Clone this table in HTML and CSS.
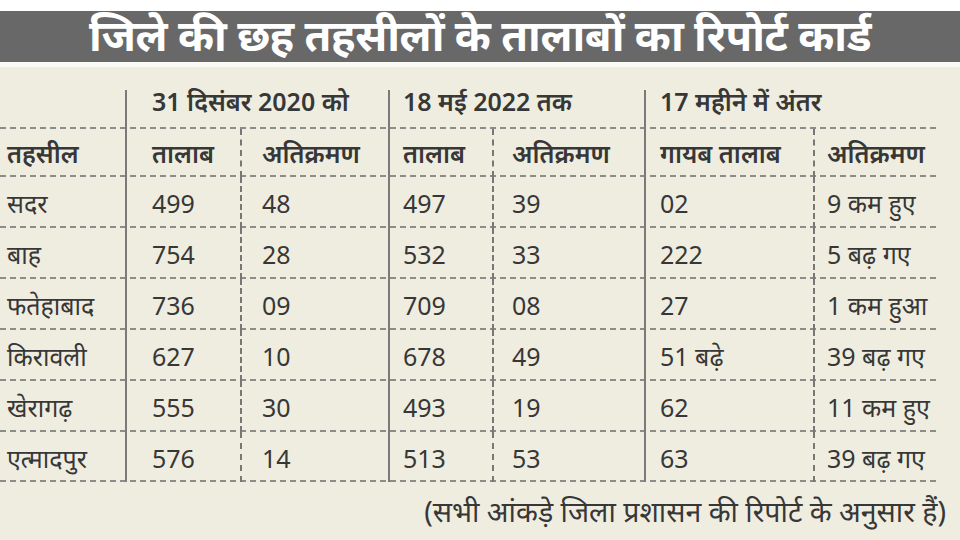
FILE: index.html
```html
<!DOCTYPE html>
<html lang="hi">
<head>
<meta charset="utf-8">
<title>तालाबों का रिपोर्ट कार्ड</title>
<link rel="stylesheet" href="styles.css">
</head>
<body>
<div class="page">
  <div class="topgap"></div>
  <header class="banner"><h1 class="title">जिले की छह तहसीलों के तालाबों का रिपोर्ट कार्ड</h1></header>
  <div class="gap"></div>
  <main class="body">
    <div class="table">
      <div class="row group">
        <div class="c first"></div>
        <div class="c span solid p2">31 दिसंबर 2020 को</div>
        <div class="c span solid p4">18 मई 2022 तक</div>
        <div class="c span solid p6">17 महीने में अंतर</div>
      </div>
      <div class="row head">
        <div class="c first">तहसील</div>
        <div class="c solid p2">तालाब</div>
        <div class="c sub p3">अतिक्रमण</div>
        <div class="c solid p4">तालाब</div>
        <div class="c sub p5">अतिक्रमण</div>
        <div class="c solid p6">गायब तालाब</div>
        <div class="c sub p7">अतिक्रमण</div>
      </div>
      <div class="row data">
        <div class="c first">सदर</div>
        <div class="c solid p2">499</div>
        <div class="c sub p3">48</div>
        <div class="c solid p4">497</div>
        <div class="c sub p5">39</div>
        <div class="c solid p6">02</div>
        <div class="c sub p7">9 कम हुए</div>
      </div>
      <div class="row data">
        <div class="c first">बाह</div>
        <div class="c solid p2">754</div>
        <div class="c sub p3">28</div>
        <div class="c solid p4">532</div>
        <div class="c sub p5">33</div>
        <div class="c solid p6">222</div>
        <div class="c sub p7">5 बढ़ गए</div>
      </div>
      <div class="row data">
        <div class="c first">फतेहाबाद</div>
        <div class="c solid p2">736</div>
        <div class="c sub p3">09</div>
        <div class="c solid p4">709</div>
        <div class="c sub p5">08</div>
        <div class="c solid p6">27</div>
        <div class="c sub p7">1 कम हुआ</div>
      </div>
      <div class="row data">
        <div class="c first">किरावली</div>
        <div class="c solid p2">627</div>
        <div class="c sub p3">10</div>
        <div class="c solid p4">678</div>
        <div class="c sub p5">49</div>
        <div class="c solid p6">51 बढ़े</div>
        <div class="c sub p7">39 बढ़ गए</div>
      </div>
      <div class="row data">
        <div class="c first">खेरागढ़</div>
        <div class="c solid p2">555</div>
        <div class="c sub p3">30</div>
        <div class="c solid p4">493</div>
        <div class="c sub p5">19</div>
        <div class="c solid p6">62</div>
        <div class="c sub p7">11 कम हुए</div>
      </div>
      <div class="row data last">
        <div class="c first">एत्मादपुर</div>
        <div class="c solid p2">576</div>
        <div class="c sub p3">14</div>
        <div class="c solid p4">513</div>
        <div class="c sub p5">53</div>
        <div class="c solid p6">63</div>
        <div class="c sub p7">39 बढ़ गए</div>
      </div>
    </div>
    <p class="note">(सभी आंकड़े जिला प्रशासन की रिपोर्ट के अनुसार हैं)</p>
  </main>
</div>
</body>
</html>
```
FILE: styles.css
```css
* { box-sizing: border-box; }
html, body { margin: 0; padding: 0; }
body {
  width: 960px;
  height: 540px;
  overflow: hidden;
  background: #efeddf;
  font-family: "Noto Sans", "Noto Sans Devanagari", "Lohit Devanagari", "Open Sans", sans-serif;
  color: #373737;
}
.page { display: flex; flex-direction: column; height: 540px; }
.topgap { height: 11px; background: #ffffff; }
.banner {
  height: 51px;
  background: #686868;
  display: flex;
  align-items: center;
  justify-content: center;
}
.title {
  margin: 0 0 4px 0;
  color: #ffffff;
  font-size: 43.5px;
  font-weight: 700;
  line-height: 1;
  letter-spacing: -0.5px;
}
.gap { height: 5px; background: #fbfbf6; }
.body { flex: 1; padding-top: 23px; }
.table { width: 940px; }
.row {
  display: grid;
  grid-template-columns: 125px 115px 148px 104px 152px 169px 127px;
  background-image: repeating-linear-gradient(90deg, #8c8c89 0 6px, transparent 6px 10px);
  background-size: 100% 2px;
  background-position: left bottom;
  background-repeat: no-repeat;
  font-size: 25px;
}
.row.group { height: 39px; }
.row.head { height: 48px; }
.row.data { height: 51px; }
.row.data.last { height: 50px; }
.c {
  display: flex;
  align-items: center;
  white-space: nowrap;
  line-height: 1;
  padding-top: 2px;
  padding-bottom: 2px;
  border-left-width: 0;
}
.row.data .c { padding-top: 4px; }
.row.group .c { align-items: flex-start; padding-top: 0; line-height: 0.9; }
.span { grid-column: span 2; }
.first { padding-left: 7px; }
.solid { border-left: 2px solid #7a7a7a; }
.row .sub { border-left-width: 2px; border-left-style: dashed; border-left-color: #777774; }
.p2 { padding-left: 25px; }
.p3 { padding-left: 20px; }
.p4 { padding-left: 13px; }
.p5 { padding-left: 18px; }
.p6 { padding-left: 14px; }
.p7 { padding-left: 12px; }
.head .c { font-weight: 600; }
.group .c { font-weight: 600; }
.note {
  margin: 12px 14px 0 0;
  text-align: right;
  font-size: 28.5px;
  line-height: 1.2;
}
```
